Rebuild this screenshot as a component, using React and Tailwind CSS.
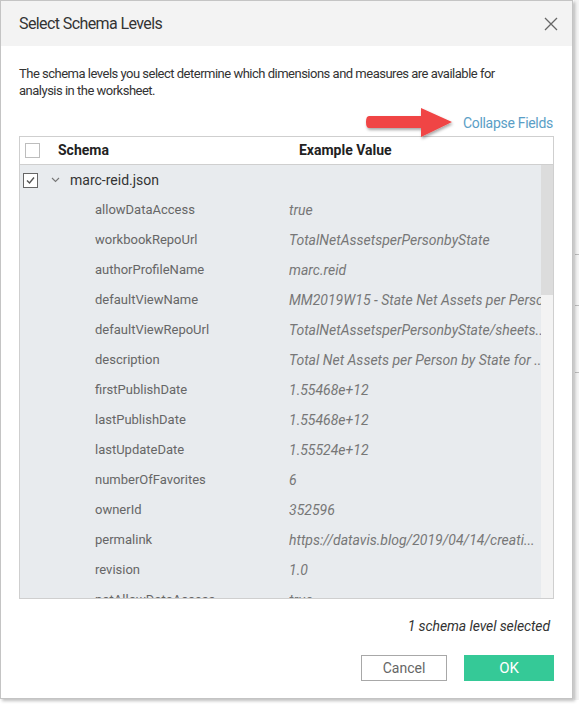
import React from "react";

const rows = [
  ["allowDataAccess", "true"],
  ["workbookRepoUrl", "TotalNetAssetsperPersonbyState"],
  ["authorProfileName", "marc.reid"],
  ["defaultViewName", "MM2019W15 - State Net Assets per Person"],
  ["defaultViewRepoUrl", "TotalNetAssetsperPersonbyState/sheets..."],
  ["description", "Total Net Assets per Person by State for ..."],
  ["firstPublishDate", "1.55468e+12"],
  ["lastPublishDate", "1.55468e+12"],
  ["lastUpdateDate", "1.55524e+12"],
  ["numberOfFavorites", "6"],
  ["ownerId", "352596"],
  ["permalink", "https://datavis.blog/2019/04/14/creati..."],
  ["revision", "1.0"],
  ["notAllowDataAccess", "true"],
];

export default function App() {
  return (
    <div
      className="relative w-[579px] h-[706px] bg-white overflow-hidden"
      style={{ fontFamily: "Roboto, 'Liberation Sans', sans-serif" }}
    >
      {/* background page strip at right */}
      <div className="absolute left-[574px] top-0 w-[5px] h-[700px] bg-[#f4f4f4]">
        <div className="absolute top-[254px] left-[1px] w-[4px] h-[1px] bg-[#bdbdbd]" />
        <div className="absolute top-[305px] left-[1px] w-[4px] h-[1px] bg-[#bdbdbd]" />
        <div className="absolute top-[372px] left-[1px] w-[4px] h-[1px] bg-[#bdbdbd]" />
      </div>

      <div className="relative w-[573px] h-[699px] bg-white border border-[#c4c4c4] shadow-[2px_2px_3px_rgba(0,0,0,0.25)] flex flex-col">
        {/* header */}
        <div className="h-[45px] bg-[#f3f3f3] flex items-center justify-between pl-[18px] pr-[14px] shrink-0">
          <span className="text-[16px] text-[#333] tracking-[-0.6px]">Select Schema Levels</span>
          <svg width="14" height="14" viewBox="0 0 14 14">
            <path d="M1 1L13 13M13 1L1 13" stroke="#666" strokeWidth="1.3" />
          </svg>
        </div>

        <div className="px-[18px] pt-[19px]">
          <p className="text-[13px] leading-[17px] text-[#333] tracking-[-0.5px]">
            The schema levels you select determine which dimensions and measures are available for
            <br />
            analysis in the worksheet.
          </p>

          <div className="relative h-[37px] flex items-start justify-end pr-[1px]">
            {/* red arrow */}
            <svg
              className="absolute left-[344px] top-[7px]"
              width="94"
              height="36"
              viewBox="0 0 94 36"
            >
              <defs>
                <filter id="sh" x="-20%" y="-30%" width="140%" height="160%">
                  <feDropShadow dx="1" dy="2" stdDeviation="1.5" floodColor="#000" floodOpacity="0.35" />
                </filter>
              </defs>
              <path
                d="M6 10 L58 10 L58 2 L89 16 L58 31 L58 22 L6 22 Q3 22 3 16 Q3 10 6 10 Z"
                fill="#f04444"
                filter="url(#sh)"
              />
            </svg>
            <span className="relative text-[14px] leading-[16px] text-[#5a9ec6] tracking-[-0.3px] mt-[16px]">
              Collapse Fields
            </span>
          </div>

          {/* table */}
          <div className="h-[463px] border border-[#cfcfcf] flex flex-col overflow-hidden">
            <div className="h-[28px] shrink-0 bg-white border-b border-[#cfcfcf] flex items-center">
              <div className="w-[15px] h-[15px] border border-[#bdbdbd] bg-white ml-[5px]" />
              <span className="ml-[18px] text-[14px] font-bold text-[#222]">Schema</span>
              <span className="ml-[190px] text-[14px] font-bold text-[#222]">Example Value</span>
            </div>
            <div className="flex-1 flex bg-[#e8ebee] overflow-hidden">
              <div className="flex-1 overflow-hidden">
                <div className="h-[30px] flex items-center">
                  <div className="w-[15px] h-[15px] border border-[#666] bg-white ml-[3px] flex items-center justify-center">
                    <svg width="11" height="11" viewBox="0 0 11 11">
                      <path d="M2 5.5 L4.5 8 L9 2.5" stroke="#555" strokeWidth="1.4" fill="none" />
                    </svg>
                  </div>
                  <svg width="9" height="6" viewBox="0 0 9 6" className="ml-[13px]">
                    <path d="M1 1 L4.5 4.5 L8 1" stroke="#777" strokeWidth="1.1" fill="none" />
                  </svg>
                  <span className="ml-[10px] text-[14px] text-[#333]">marc-reid.json</span>
                </div>
                {rows.map(([k, v]) => (
                  <div key={k} className="h-[30px] flex items-center">
                    <span className="w-[269px] pl-[75px] shrink-0 text-[13px] text-[#666] whitespace-nowrap overflow-hidden">
                      {k}
                    </span>
                    <span className="w-[252px] overflow-hidden whitespace-nowrap italic text-[14px] text-[#777]">
                      {v}
                    </span>
                  </div>
                ))}
              </div>
              <div className="w-[12px] shrink-0 bg-[#f3f3f3]">
                <div className="h-[130px] bg-[#dcdcdc]" />
              </div>
            </div>
          </div>

          <div className="mt-[17px] text-right pr-[4px] text-[14px] italic text-[#333] tracking-[-0.1px]">
            1 schema level selected
          </div>

          <div className="mt-[18px] flex justify-end gap-[17px]">
            <button className="w-[86px] h-[26px] border border-[#a8a8a8] bg-white text-[14px] text-[#666]">
              Cancel
            </button>
            <button className="w-[90px] h-[26px] bg-[#35c997] text-[15px] text-white">OK</button>
          </div>
        </div>
      </div>
    </div>
  );
}
